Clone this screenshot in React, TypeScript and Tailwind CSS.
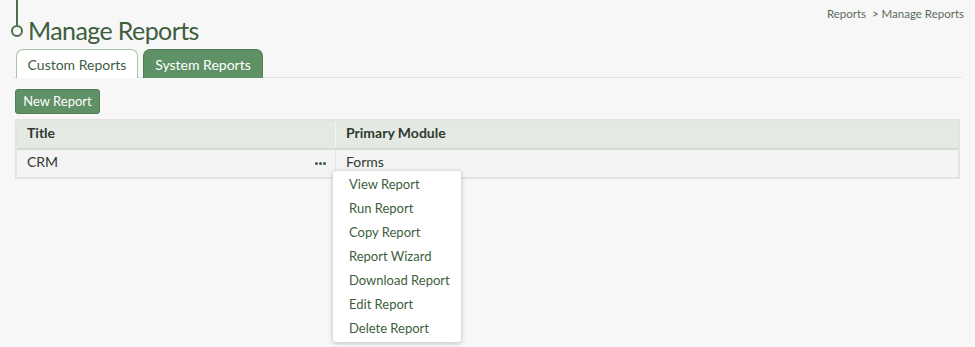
const menuItems = [
  "View Report",
  "Run Report",
  "Copy Report",
  "Report Wizard",
  "Download Report",
  "Edit Report",
  "Delete Report",
];

export default function App() {
  return (
    <div className="relative h-[347px] w-[975px] overflow-hidden bg-[#f7f7f7] font-['Lato',sans-serif] text-[#3b5a3b]">
      {/* header */}
      <div className="flex items-start justify-between pr-[11px]">
        <div className="flex items-start">
          <div className="ml-[10px] flex w-[13px] flex-col items-center">
            <div className="h-[25px] w-[2px] bg-[#4d6e4d]" />
            <div className="h-[12px] w-[12px] rounded-full border-2 border-[#4d6e4d]" />
          </div>
          <h1 className="ml-[5px] mt-[14px] text-[25px] leading-[32px] tracking-[-0.6px] text-[#3e5e3e]">
            Manage Reports
          </h1>
        </div>
        <div className="mt-[5px] text-[11.5px] text-[#5b6b5b]">
          Reports &nbsp;&gt; Manage Reports
        </div>
      </div>

      {/* tabs */}
      <div className="mx-[13px] mt-[3px] flex items-end gap-[5px] border-b border-[#e2e5e2] pl-[3px]">
        <div className="-mb-px flex h-[29px] w-[122px] items-center justify-center rounded-t-[7px] border border-b-0 border-[#a9c2a9] bg-white text-[14px] text-[#3e5e3e]">
          Custom Reports
        </div>
        <div className="-mb-px flex h-[29px] w-[120px] items-center justify-center rounded-t-[7px] border border-b-0 border-[#4f7f55] bg-[#5f9166] text-[14px] text-white">
          System Reports
        </div>
      </div>

      {/* new report */}
      <div className="ml-[15px] mt-[10px]">
        <button className="h-[25px] w-[85px] rounded-[3px] border border-[#4f7d54] bg-[#5f9066] text-[13px] text-white">
          New Report
        </button>
      </div>

      {/* table */}
      <div className="mx-[15px] mt-[5px] border-2 border-[#e3e3e3]">
        <div className="grid grid-cols-[319px_1fr] border-b-2 border-[#d6dbd6] bg-[#e4e9e4] text-[14px] font-bold text-[#2f3a2f]">
          <div className="h-[27px] border-r border-[#f4f4f4] pl-[10px] leading-[23px]">Title</div>
          <div className="h-[27px] pl-[10px] leading-[23px]">Primary Module</div>
        </div>
        <div className="grid grid-cols-[319px_1fr] bg-[#f4f4f4] text-[14px] text-[#2f3a2f]">
          <div className="flex h-[27px] items-center justify-between border-r border-[#e3e3e3] pb-[4px] pl-[10px] pr-[9px]">
            <span>CRM</span>
            <span className="flex gap-[1px] pt-[4px]">
              <span className="h-[3px] w-[3px] rounded-full bg-[#3e5e3e]" />
              <span className="h-[3px] w-[3px] rounded-full bg-[#3e5e3e]" />
              <span className="h-[3px] w-[3px] rounded-full bg-[#3e5e3e]" />
            </span>
          </div>
          <div className="flex h-[27px] items-center pb-[4px] pl-[10px]">Forms</div>
        </div>
      </div>

      {/* dropdown menu */}
      <div className="absolute left-[333px] top-[171px] w-[128px] rounded-[3px] bg-white pb-[2px] pt-[1px] shadow-[0_1px_5px_rgba(0,0,0,0.25)]">
        {menuItems.map((item) => (
          <div key={item} className="h-[24px] pl-[16px] text-[13px] leading-[24px] text-[#3e5e3e]">
            {item}
          </div>
        ))}
      </div>
    </div>
  );
}
